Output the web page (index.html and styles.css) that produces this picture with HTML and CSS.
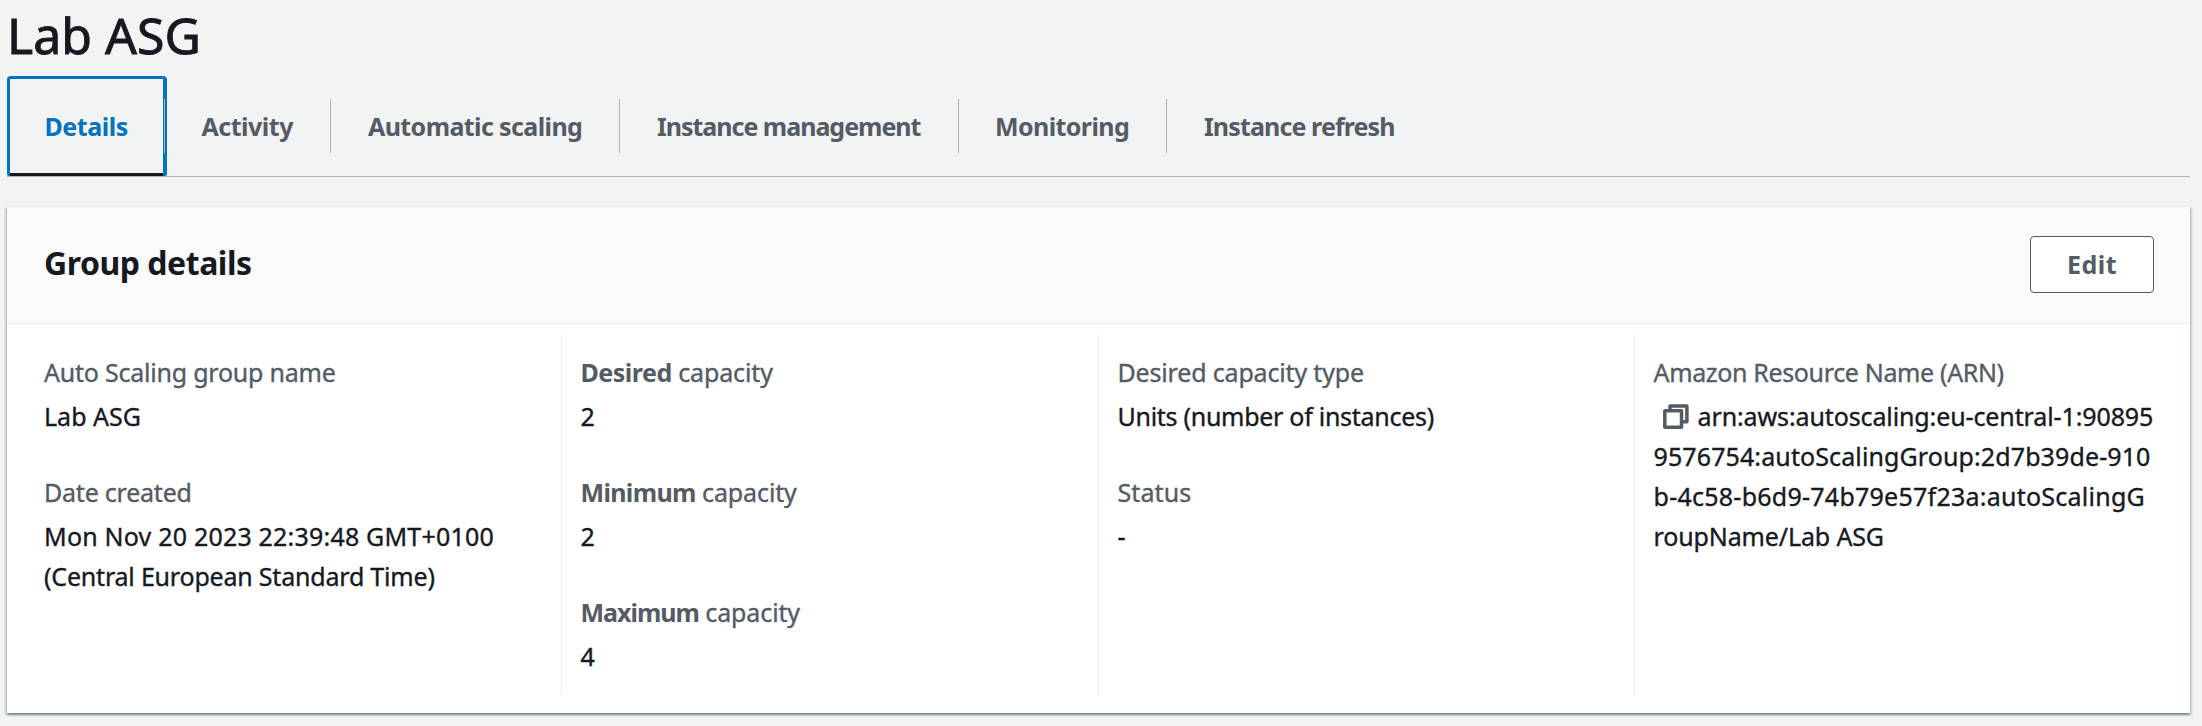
FILE: index.html
```html
<!DOCTYPE html>
<html lang="en">
<head>
<meta charset="utf-8">
<title>Lab ASG</title>
<link rel="stylesheet" href="styles.css">
</head>
<body>
<main class="page">
  <h1 class="title">Lab ASG</h1>
  <nav class="tabs">
    <a class="tab tab-details"><span>Details</span></a>
    <a class="tab tab-activity"><span>Activity</span></a>
    <a class="tab tab-scaling"><span>Automatic scaling</span></a>
    <a class="tab tab-management"><span>Instance management</span></a>
    <a class="tab tab-monitoring"><span>Monitoring</span></a>
    <a class="tab tab-refresh"><span>Instance refresh</span></a>
  </nav>
  <section class="card">
    <header class="card-header">
      <h2 class="card-title">Group details</h2>
      <button class="edit">Edit</button>
    </header>
    <div class="columns">
      <dl class="column">
        <div class="field"><dt class="t-name">Auto Scaling group name</dt><dd class="t-lab">Lab ASG</dd></div>
        <div class="field"><dt class="t-date">Date created</dt><dd><span class="t-time">Mon Nov 20 2023 22:39:48 GMT+0100</span><br><span class="t-zone">(Central European Standard Time)</span></dd></div>
      </dl>
      <dl class="column">
        <div class="field"><dt class="t-cap"><b class="t-desired">Desired</b> capacity</dt><dd>2</dd></div>
        <div class="field"><dt class="t-cap"><b class="t-minimum">Minimum</b> capacity</dt><dd>2</dd></div>
        <div class="field"><dt class="t-cap"><b class="t-maximum">Maximum</b> capacity</dt><dd>4</dd></div>
      </dl>
      <dl class="column">
        <div class="field"><dt class="t-type">Desired capacity type</dt><dd class="t-units">Units (number of instances)</dd></div>
        <div class="field"><dt class="t-status">Status</dt><dd>-</dd></div>
      </dl>
      <dl class="column">
        <div class="field"><dt class="t-arn">Amazon Resource Name (ARN)</dt>
          <dd><svg class="copy" viewBox="0 0 26 26" width="26" height="26"><path d="M1.8 6.8H18.5V23.3H1.8Z M7 6.8V2H23.9V17.8H18.5"/></svg><span class="t-arn1">arn:aws:autoscaling:eu-central-1:90895</span><br><span class="t-arn2">9576754:autoScalingGroup:2d7b39de-910</span><br><span class="t-arn3">b-4c58-b6d9-74b79e57f23a:autoScalingG</span><br><span class="t-arn4">roupName/Lab ASG</span></dd></div>
      </dl>
    </div>
  </section>
</main>
</body>
</html>
```
FILE: styles.css
```css
*, *::before, *::after { box-sizing: border-box; }
body {
  margin: 0;
  background: #f2f3f3;
  color: #16191f;
  font-family: "Noto Sans", "Open Sans", sans-serif;
  font-size: 25px;
}
.page { height: 726px; padding: 0 12px 0 7px; }
.title {
  margin: 0;
  height: 76px;
  line-height: 71px;
  font-size: 50px;
  font-weight: 400;
  letter-spacing: 0;
  -webkit-text-stroke: 0.9px currentColor;
}

.tabs {
  display: flex;
  height: 101px;
  border-bottom: 1px solid #aab7b8;
  color: #545b64;
  font-weight: 700;
  line-height: 100px;
  white-space: nowrap;
}
.tab { position: relative; height: 100px; padding-left: 37px; }
.tab:not(:last-child)::after {
  content: "";
  position: absolute;
  right: 0;
  top: 23px;
  width: 1px;
  height: 54px;
  background: #aab7b8;
}
.tab-details { width: 158px; color: #0073bb; letter-spacing: -0.45px; padding-left: 37.5px; }
.tab-details::before {
  content: "";
  position: absolute;
  left: 0;
  top: 0;
  width: 160px;
  height: 100px;
  border: 3px solid #0073bb;
  border-right-width: 4px;
  border-bottom: 0;
  border-radius: 4px 4px 2px 2px;
  background: linear-gradient(#16191f, #16191f) bottom / 100% 3px no-repeat;
}
.tab-activity { width: 166px; letter-spacing: -0.5px; padding-left: 36.5px; }
.tab-scaling { width: 289px; letter-spacing: -0.6px; }
.tab-management { width: 339px; letter-spacing: -1.01px; }
.tab-monitoring { width: 208px; letter-spacing: -0.59px; padding-left: 36px; }
.tab-refresh { letter-spacing: -0.87px; }

.card {
  margin-top: 29px;
  height: 507px;
  border-top: 1px solid #eaeded;
  background: #fff;
  box-shadow: 0 2px 2px 0 rgba(0, 28, 36, 0.3),
    2px 2px 2px 0 rgba(0, 28, 36, 0.15),
    -2px 2px 2px 0 rgba(0, 28, 36, 0.15);
}
.card-header {
  display: flex;
  justify-content: space-between;
  height: 117px;
  padding: 0 36px 0 37px;
  background: #fafafa;
  border-bottom: 1px solid #eaeded;
}
.card-title {
  margin: 0;
  font-size: 32px;
  line-height: 111px;
  letter-spacing: -0.47px;
}
.edit {
  width: 124px;
  height: 57px;
  margin-top: 29px;
  padding: 0;
  border: 1px solid #545b64;
  border-radius: 4px;
  background: #fff;
  color: #545b64;
  font: 700 25px/55px "Noto Sans", "Open Sans", sans-serif;
  letter-spacing: 0.5px;
}

.columns {
  display: grid;
  grid-template-columns: 554px 537px 536px 1fr;
  padding-top: 11px;
}
.column {
  display: flex;
  flex-direction: column;
  gap: 36px;
  height: 360px;
  margin: 0;
  padding: 17px 0 0 18.5px;
  border-left: 1px solid #eaeded;
  white-space: nowrap;
  -webkit-text-stroke: 0.35px currentColor;
}
.column b { -webkit-text-stroke: 0; }
.column:first-child { padding-left: 37px; border-left: 0; }
.field { line-height: 40px; }
dt { height: 44px; color: #545b64; }
dd { margin: 0; }
.copy {
  width: 26px;
  height: 26px;
  margin: 0 9px 0 9px;
  vertical-align: -4px;
  fill: none;
  stroke: #545b64;
  stroke-width: 3.5;
  stroke-linejoin: round;
}

.t-name { letter-spacing: -0.22px; }
.t-lab { letter-spacing: 0; }
.t-date { letter-spacing: -0.22px; }
.t-time { letter-spacing: 0.2px; }
.t-zone { letter-spacing: -0.2px; }
.t-cap { letter-spacing: -0.13px; }
.t-desired { letter-spacing: -0.48px; }
.t-minimum { letter-spacing: -0.65px; }
.t-maximum { letter-spacing: -1px; }
.t-type { letter-spacing: -0.17px; }
.t-units { letter-spacing: -0.28px; }
.t-status { letter-spacing: 0.1px; }
.t-arn { letter-spacing: -0.35px; }
.t-arn1 { letter-spacing: -0.11px; }
.t-arn2 { letter-spacing: 0.11px; }
.t-arn3 { letter-spacing: 0.25px; }
.t-arn4 { letter-spacing: -0.13px; }
```
